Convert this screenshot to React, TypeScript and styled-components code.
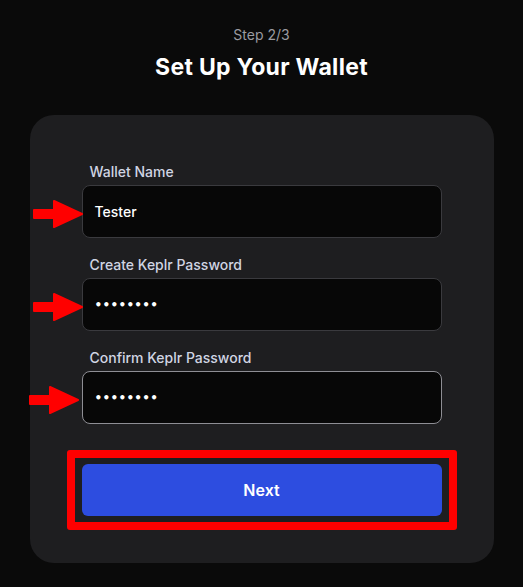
import React from "react";
import styled, { createGlobalStyle } from "styled-components";

const Global = createGlobalStyle`
  html, body { margin: 0; padding: 0; background: #0a0a0a; }
  body { font-family: Inter, "Noto Sans", sans-serif; -webkit-font-smoothing: antialiased; }
`;

const Page = styled.div`
  width: 523px;
  height: 587px;
  background: #0a0a0a;
  display: flex;
  flex-direction: column;
  align-items: center;
  padding-top: 26px;
  box-sizing: border-box;
`;

const Step = styled.div`
  font-size: 14px;
  color: #9b9ba1;
  line-height: 18px;
`;

const Title = styled.h1`
  margin: 9px 0 0;
  font-size: 23px;
  font-weight: 700;
  color: #ffffff;
  line-height: 28px;
  letter-spacing: 0.3px;
`;

const Card = styled.div`
  margin-top: 34px;
  width: 464px;
  background: #1e1e20;
  border-radius: 24px;
  padding: 48px 52px 47px;
  box-sizing: border-box;
  display: flex;
  flex-direction: column;
`;

const Field = styled.div<{ $gap: number }>`
  position: relative;
  display: flex;
  flex-direction: column;
  gap: 5px;
  margin-top: ${(p) => p.$gap}px;
`;

const Label = styled.label`
  padding-left: 8px;
  font-size: 14px;
  font-weight: 500;
  color: #d0d5e3;
  line-height: 17px;
`;

const Input = styled.div<{ $focused?: boolean }>`
  height: 53px;
  box-sizing: border-box;
  background: #070707;
  border: 1px solid ${(p) => (p.$focused ? "#8e8e94" : "#3a3a3e")};
  border-radius: 8px;
  display: flex;
  align-items: center;
  padding-left: 12px;
  font-size: 14px;
  font-weight: 500;
  color: #ffffff;
`;

const Dots = styled.span`
  font-size: 12px;
  letter-spacing: 0.3px;
  color: #ffffff;
  font-family: "DejaVu Sans", sans-serif;
  font-weight: 700;
`;

const Arrow = styled.svg<{ $left: number }>`
  position: absolute;
  left: ${(p) => p.$left}px;
  bottom: 10px;
`;

const ButtonWrap = styled.div`
  position: relative;
  margin-top: 40px;
`;

const Highlight = styled.div`
  position: absolute;
  left: -15px;
  right: -15px;
  top: -14px;
  bottom: -14px;
  border: 8px solid #ff0000;
  border-radius: 3px;
  pointer-events: none;
`;

const Button = styled.button`
  width: 100%;
  height: 52px;
  border: none;
  border-radius: 6px;
  background: #2d4de0;
  color: #ffffff;
  font-family: Inter, "Noto Sans", sans-serif;
  font-size: 16px;
  font-weight: 600;
`;

const RedArrow = ({ left }: { left: number }) => (
  <Arrow $left={left} width="52" height="28" viewBox="0 0 52 28">
    <path d="M2 10 H22 V1 L50 14 L22 27 V18 H2 Z" fill="#ff0000" strokeLinejoin="round" stroke="#ff0000" strokeWidth="2" />
  </Arrow>
);

export default function App() {
  return (
    <>
      <Global />
      <Page>
        <Step>Step 2/3</Step>
        <Title>Set Up Your Wallet</Title>
        <Card>
          <Field $gap={0}>
            <Label>Wallet Name</Label>
            <Input>Tester</Input>
            <RedArrow left={-50} />
          </Field>
          <Field $gap={18}>
            <Label>Create Keplr Password</Label>
            <Input>
              <Dots>••••••••</Dots>
            </Input>
            <RedArrow left={-50} />
          </Field>
          <Field $gap={18}>
            <Label>Confirm Keplr Password</Label>
            <Input $focused>
              <Dots>••••••••</Dots>
            </Input>
            <RedArrow left={-54} />
          </Field>
          <ButtonWrap>
            <Button>Next</Button>
            <Highlight />
          </ButtonWrap>
        </Card>
      </Page>
    </>
  );
}
